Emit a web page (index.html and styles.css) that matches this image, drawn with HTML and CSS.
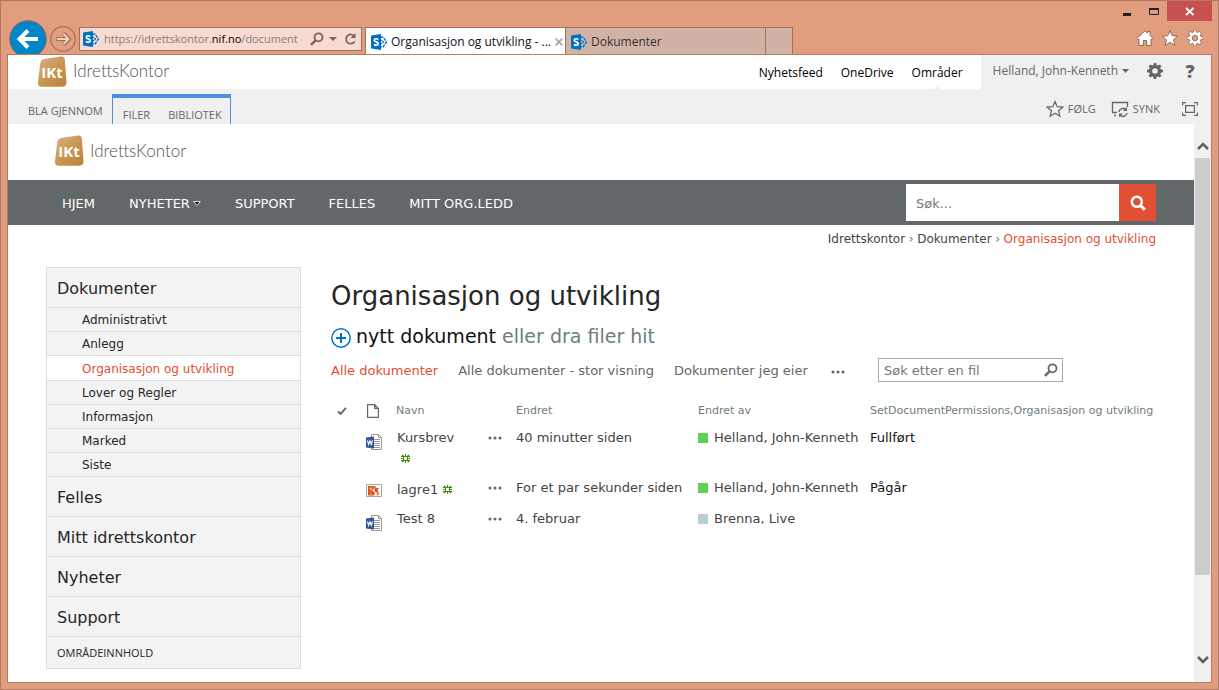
FILE: index.html
```html
<!DOCTYPE html>
<html lang="no">
<head>
<meta charset="utf-8">
<title>Organisasjon og utvikling - Dokumenter</title>
<link rel="stylesheet" href="styles.css">
</head>
<body>
<svg class="defs" aria-hidden="true">
  <defs>
    <linearGradient id="gold" x1="0" y1="0" x2="1" y2="1">
      <stop offset="0" stop-color="#d9b384"/>
      <stop offset="0.55" stop-color="#c79450"/>
      <stop offset="1" stop-color="#bd8237"/>
    </linearGradient>
    <symbol id="sharepoint" viewBox="0 0 16 16">
      <path d="M9.500 3.500 12 3l3.500 5L12 13l-2.500-.5" fill="none" stroke="#0072c6" stroke-width="1.400" stroke-dasharray="3 1"/>
      <path d="M9 5.500 13 8l-4 2.500z" fill="none" stroke="#0072c6"/>
      <path d="M0 1.500 10 0v16L0 14.500z" fill="#0072c6"/>
      <path d="M7.300 5.400C5.500 4.300 3.300 4.600 3.300 6.200c0 2 3.900 1.400 3.900 3.500 0 1.700-2.400 2-4.200.8" fill="none" stroke="#fff" stroke-width="1.700"/>
    </symbol>
    <symbol id="gear" viewBox="0 0 16 16">
      <path fill-rule="evenodd" d="M6.800 0h2.400l.4 2.100 1.200.5L12.600 1.400l1.900 1.900-1.300 1.800.5 1.200 2.300.4v2.500l-2.300.5-.5 1.200 1.300 1.800-1.900 1.900-1.800-1.300-1.200.6L9.200 16H6.800l-.4-2.100-1.200-.6-1.800 1.300-1.900-1.900 1.300-1.800-.5-1.200L0 9.200V6.700l2.300-.4.5-1.200-1.300-1.800 1.900-1.900 1.800 1.200 1.200-.5zM8 5.200a2.800 2.800 0 1 0 0 5.600 2.800 2.800 0 0 0 0-5.600z"/>
    </symbol>
    <symbol id="star" viewBox="0 0 18 18">
      <path d="M9 1.500l2.200 5.200 5.600.4-4.300 3.600 1.400 5.600L9 13.300l-4.900 3 1.400-5.600L1.200 7.100l5.600-.4z"/>
    </symbol>
    <symbol id="lens" viewBox="0 0 14 14">
      <circle cx="8.500" cy="5.300" r="4" fill="none" stroke="currentColor" stroke-width="1.800"/>
      <path d="M5.500 8.300 1 12.800" stroke="currentColor" stroke-width="2.400"/>
    </symbol>
    <symbol id="word" viewBox="0 0 16 16">
      <path d="M5.500.5h7l3 3v12h-10z" fill="#fff" stroke="#9a9a9a"/>
      <path d="M12.500.5v3h3M8 5.500h6M8 7.500h6M8 9.500h6M8 11.500h6M8 13.500h6" fill="none" stroke="#9a9a9a"/>
      <path d="M0 3.500 8 2.500v12l-8-1z" fill="#2b579a"/>
      <path d="M1.500 6.300 2.600 10.500 4 6.800l1.400 3.700 1.100-4.200" fill="none" stroke="#fff" stroke-width="1.100"/>
    </symbol>
    <symbol id="picture" viewBox="0 0 16 13">
      <path d="M.5.5h15v12H.5z" fill="#fff" stroke="#a6a6a6"/>
      <path d="M2 2h7l-1 3-2 2-4 1zM2 8l5-1 2 2-1 2.500H2z" fill="#d9532c"/>
      <circle cx="5" cy="4.800" r="1.500" fill="#f6b73c"/>
      <path d="M9 2l1.500 2L13 4l-1.500 2.500L13 9l-3-.5L8.500 7z" fill="#d9532c"/>
      <path d="M4.500 8.200 6 10l-2 1.500zM10.500 9.500l2-1 1.500 1.500-1.500 1.500h-2z" fill="#f0a030"/>
    </symbol>
    <symbol id="new" viewBox="0 0 9 9">
      <g fill="none" stroke="#3c8a0a"><path d="M4.500 0v2.500M4.500 6.500V9M0 4.500h1.800M7.200 4.500H9"/><path d="M1 1l2 2M8 1 6 3M1 8l2-2M8 8 6 6" stroke-width="1.400"/><path d="M2.500 2.500h4v4h-4z"/><path d="M0 2.500h2.500M6.500 2.500H9M0 6.500h2.500M6.500 6.500H9"/></g>
    </symbol>
    <symbol id="dots" viewBox="0 0 14 4"><path d="M2 2h.01M7 2h.01M12 2h.01" stroke="#666" stroke-width="3" stroke-linecap="round"/></symbol>
    <symbol id="logo" viewBox="0 0 30 31">
      <path d="M4.500 4.500Q5 3.500 7 3L24 .4Q27.500.2 27.800 3.500L29.500 26Q29.500 30.500 25.500 30.700H5Q.7 30.700.9 27L3.300 7Q3.600 5.200 4.500 4.500z" fill="url(#gold)"/>
      <text x="15" y="21.500" class="logo-letters">IKt</text>
    </symbol>
  </defs>
</svg>

<div class="window">
  <header class="chrome">
    <div class="chrome-main">
      <button class="back" aria-label="Tilbake"><svg viewBox="0 0 38 38"><circle cx="19" cy="19" r="18.300" fill="#0086c8" stroke="#8c6455"/><path d="M29 19H11M19 10.500 10.500 19l8.500 8.500" fill="none" stroke="#fff" stroke-width="4"/></svg></button>
      <button class="forward" aria-label="Frem"><svg viewBox="0 0 26 26"><circle cx="13" cy="13" r="12.300" fill="none" stroke="#a56f59" stroke-width="1.200"/><path d="M6 13h12M13.500 7.500 19 13l-5.500 5.500" fill="none" stroke="#a56f59" stroke-width="4"/><path d="M6.800 13h11.500M13.500 8 18.500 13l-5 5" fill="none" stroke="#f3cdbd" stroke-width="2"/></svg></button>
      <div class="address">
        <svg class="i16"><use href="#sharepoint"/></svg>
        <span class="url">https://idrettskontor.<b>nif.no</b>/document</span>
        <svg class="i14"><use href="#lens"/></svg>
        <svg class="drop" viewBox="0 0 8 4"><path d="M0 0h8L4 4z" fill="#85604f"/></svg>
        <svg class="i14" viewBox="0 0 14 14"><path d="M11.500 4.500A4.600 4.600 0 1 0 11.600 9.500" fill="none" stroke="currentColor" stroke-width="1.700"/><path d="M12.500 1v5h-5z" fill="currentColor"/></svg>
      </div>
      <div class="tabs">
        <div class="tab tab-on"><svg class="i16"><use href="#sharepoint"/></svg><span>Organisasjon og utvikling - ...</span>
          <button class="tab-close" aria-label="Lukk fane"><svg viewBox="0 0 8 8"><path d="M.7.7 7.300 7.300M7.300.7.7 7.300" stroke="#aaa" stroke-width="1.900"/></svg></button></div>
        <div class="tab"><svg class="i16"><use href="#sharepoint"/></svg><span>Dokumenter</span></div>
        <button class="tab-new" aria-label="Ny fane"></button>
      </div>
    </div>
    <div class="chrome-side">
      <div class="controls">
        <button aria-label="Minimer"><svg viewBox="0 0 27 20"><path d="M10 12h8v3h-8z" fill="#222"/></svg></button>
        <button aria-label="Maksimer"><svg viewBox="0 0 27 20"><path d="M9.500 7.500h9v6h-9z" fill="none" stroke="#222"/><path d="M9 7h10v2H9z" fill="#222"/></svg></button>
        <button class="close" aria-label="Lukk"><svg viewBox="0 0 45 20"><path d="M19 7l7.500 7M26.500 7 19 14" stroke="#fff" stroke-width="1.800"/></svg></button>
      </div>
      <div class="tools">
        <button aria-label="Hjem"><svg viewBox="0 0 18 18"><path d="M1 9.500 9 1.800l2.500 2.300V2.500h2.600v4L17 9.500l-1.200 1.300-.8-.8v6.500h-4.300v-5H7.300v5H3V10l-.8.800z" fill="#fff" stroke="#85604f" stroke-width=".9"/></svg></button>
        <button aria-label="Favoritter"><svg fill="#fff" stroke="#85604f" stroke-width=".9"><use href="#star"/></svg></button>
        <button aria-label="Verktøy"><svg viewBox="-1 -1 18 18" fill="#fff" stroke="#85604f" stroke-width=".8"><use href="#gear" width="16" height="16"/></svg></button>
      </div>
    </div>
  </header>

  <div class="page">
    <div class="suite">
      <a class="logo" href="#"><svg><use href="#logo"/></svg><span>IdrettsKontor</span></a>
      <nav class="suite-links"><a href="#">Nyhetsfeed</a><a href="#">OneDrive</a><a class="here" href="#">Områder</a></nav>
      <div class="account">
        <button class="user">Helland, John-Kenneth<svg viewBox="0 0 7 4"><path d="M0 0h7L3.500 4z"/></svg></button>
        <button aria-label="Innstillinger"><svg class="i16" fill="#666"><use href="#gear"/></svg></button>
        <button class="help" aria-label="Hjelp">?</button>
      </div>
    </div>

    <div class="ribbon">
      <a class="browse" href="#">BLA GJENNOM</a>
      <div class="ribbon-group"><a href="#">FILER</a><a href="#">BIBLIOTEK</a></div>
      <div class="ribbon-actions">
        <button><svg class="i18" fill="none" stroke="#666" stroke-width="1.200"><use href="#star"/></svg>FØLG</button>
        <button><svg class="i18" viewBox="0 0 18 18" fill="none" stroke="#666" stroke-width="1.300"><path d="M6 12.500H1.500V2.500h15V7M3 15.500h2"/><path d="M8 12a4 4 0 0 1 7-2.200M16 13a4 4 0 0 1-7 2" stroke-width="1.500"/><path d="M16 7v4h-4zM8 17.500v-4h4z" fill="#666" stroke="none"/></svg>SYNK</button>
        <button class="focus" aria-label="Fokus på innhold"><svg viewBox="0 0 16 14" fill="none" stroke="#666" stroke-width="1.200"><path d="M.6 3.500V.6H4M12 .6h3.400v2.900M.6 10.500v2.900H4M12 13.400h3.400v-2.900M3.600 3.600h8.800v6.800H3.600z"/></svg></button>
      </div>
    </div>

    <div class="body">
      <div class="site">
        <div class="brand"><a class="logo" href="#"><svg><use href="#logo"/></svg><span>IdrettsKontor</span></a></div>
        <div class="topnav">
          <nav><a href="#">HJEM</a><a href="#">NYHETER<svg viewBox="0 0 8 5"><path d="M.7.5h6.600L4 4.500z" fill="#111" stroke="#fff" stroke-width=".8"/></svg></a><a href="#">SUPPORT</a><a href="#">FELLES</a><a href="#">MITT ORG.LEDD</a></nav>
          <form class="search">
            <input type="text" placeholder="Søk..." aria-label="Søk">
            <button type="button" aria-label="Søk"><svg viewBox="0 0 16 16" fill="none" stroke="#fff"><circle cx="6.800" cy="6.800" r="5" stroke-width="2.600"/><path d="m10.500 10.500 4.300 4.300" stroke-width="3"/></svg></button>
          </form>
        </div>
        <div class="crumbs"><a href="#">Idrettskontor</a><i>›</i><a href="#">Dokumenter</a><i>›</i><a class="red" href="#">Organisasjon og utvikling</a></div>

        <div class="columns">
          <nav class="side">
            <a class="top" href="#">Dokumenter</a>
            <a class="sub" href="#">Administrativt</a>
            <a class="sub" href="#">Anlegg</a>
            <a class="sub on" href="#">Organisasjon og utvikling</a>
            <a class="sub" href="#">Lover og Regler</a>
            <a class="sub" href="#">Informasjon</a>
            <a class="sub" href="#">Marked</a>
            <a class="sub" href="#">Siste</a>
            <a class="top" href="#">Felles</a>
            <a class="top" href="#">Mitt idrettskontor</a>
            <a class="top" href="#">Nyheter</a>
            <a class="top" href="#">Support</a>
            <a class="all" href="#">OMRÅDEINNHOLD</a>
          </nav>

          <main>
            <h1>Organisasjon og utvikling</h1>
            <div class="newdoc"><svg viewBox="0 0 20 20" fill="none" stroke="#0072c6"><circle cx="10" cy="10" r="9.200" stroke-width="1.500"/><path d="M10 5v10M5 10h10" stroke-width="2"/></svg><p><a href="#">nytt dokument</a> eller dra filer hit</p></div>
            <div class="views">
              <a class="red" href="#">Alle dokumenter</a><a href="#">Alle dokumenter - stor visning</a><a href="#">Dokumenter jeg eier</a>
              <button class="more" aria-label="Flere visninger"><svg class="dots"><use href="#dots"/></svg></button>
              <div class="filter"><input type="text" placeholder="Søk etter en fil" aria-label="Søk etter en fil"><button aria-label="Søk i filer"><svg class="i14"><use href="#lens"/></svg></button></div>
            </div>
            <table>
              <colgroup><col class="c-check"><col class="c-type"><col class="c-name"><col class="c-menu"><col class="c-date"><col class="c-by"><col></colgroup>
              <thead><tr>
                <th class="mark"><svg class="check" viewBox="0 0 10 8"><path d="M1 4.500 3.500 7 9 .8" fill="none" stroke="#666" stroke-width="1.900"/></svg></th>
                <th class="mark"><svg class="sheet" viewBox="0 0 12 14"><path d="M.6.6h7l3.800 3.800v9H.6zM7.600.6v3.800h3.800" fill="none" stroke="#666" stroke-width="1.200"/></svg></th>
                <th>Navn</th><th></th><th>Endret</th><th>Endret av</th><th>SetDocumentPermissions,Organisasjon og utvikling</th>
              </tr></thead>
              <tbody>
                <tr><td></td><td class="type"><svg class="i16"><use href="#word"/></svg></td><td><a href="#">Kursbrev</a><svg class="fresh below"><use href="#new"/></svg></td><td class="menu"><button aria-label="Meny for Kursbrev"><svg class="dots"><use href="#dots"/></svg></button></td><td>40 minutter siden</td><td><span class="who"><i class="free"></i>Helland, John-Kenneth</span></td><td class="dark">Fullført</td></tr>
                <tr><td></td><td class="type"><svg class="pic"><use href="#picture"/></svg></td><td class="badged"><a href="#">lagre1</a><svg class="fresh"><use href="#new"/></svg></td><td class="menu"><button aria-label="Meny for lagre1"><svg class="dots"><use href="#dots"/></svg></button></td><td>For et par sekunder siden</td><td><span class="who"><i class="free"></i>Helland, John-Kenneth</span></td><td class="dark">Pågår</td></tr>
                <tr><td></td><td class="type"><svg class="i16"><use href="#word"/></svg></td><td><a href="#">Test 8</a></td><td class="menu"><button aria-label="Meny for Test 8"><svg class="dots"><use href="#dots"/></svg></button></td><td>4. februar</td><td><span class="who"><i></i>Brenna, Live</span></td><td></td></tr>
              </tbody>
            </table>
          </main>
        </div>
      </div>
      <div class="scrollbar">
        <button aria-label="Rull opp"><svg viewBox="0 0 12 8"><path d="M1 7l5-5 5 5" fill="none" stroke="#606060" stroke-width="2.600"/></svg></button>
        <div class="track"><div class="thumb"></div></div>
        <button class="down" aria-label="Rull ned"><svg viewBox="0 0 12 8"><path d="M1 1l5 5 5-5" fill="none" stroke="#606060" stroke-width="2.600"/></svg></button>
      </div>
    </div>
  </div>
</div>
</body>
</html>
```
FILE: styles.css
```css
* { box-sizing: border-box; }

body {
  margin: 0;
  color: #444;
  font: 13px/20px "DejaVu Sans", Verdana, sans-serif;
  background: #e29d7e;
}

a { color: inherit; text-decoration: none; }
button { display: block; margin: 0; padding: 0; border: 0; background: none; color: inherit; font: inherit; }
input { min-width: 0; border: 0; margin: 0; font: inherit; color: #444; background: #fff; }
input::placeholder { color: #777; opacity: 1; }
svg { display: block; flex: none; }
.defs { position: absolute; width: 0; height: 0; }
.i14 { width: 14px; height: 14px; }
.i16 { width: 16px; height: 16px; }
.i18 { width: 18px; height: 18px; }
.dots { width: 14px; height: 4px; }
.red { color: #e14f34; }

/* Browser window */
.window { min-height: 100vh; display: flex; flex-direction: column; border: 1px solid #b07a63; padding: 0 6px 6px; }
.chrome, .suite, .ribbon { font-family: "Open Sans", "Segoe UI", sans-serif; font-size: 12px; line-height: 16px; }
.chrome { display: flex; justify-content: space-between; height: 53px; overflow: hidden; }
.chrome-main { display: flex; align-items: flex-end; padding-left: 2px; }
.back { width: 38px; height: 38px; margin-bottom: -4px; }
.forward { width: 26px; height: 26px; margin: 0 3px 2px; }
.address { display: flex; align-items: center; width: 283px; height: 24px; margin: 0 3px 3px 0; padding: 0 4px 0 3px; border: 1px solid #a56f59; background: #f5dbd2; color: #85604f; }
.address svg:first-child { margin-right: 5px; }
.url { flex: 1; min-width: 0; white-space: nowrap; font-size: 11px; color: #8a7a74; }
.url b { font-weight: 400; color: #000; }
.drop { width: 8px; height: 4px; margin: 0 6px 0 5px; }
.tabs { display: flex; }
.tab { display: flex; align-items: center; gap: 4px; width: 200px; height: 27px; padding: 2px 5px 0; border: 1px solid #a56f59; border-width: 1px 0 0 1px; background: #d1b3a6; color: #333; white-space: nowrap; }
.tab-on { background: #fff; color: #111; }
.tab-close { width: 8px; height: 8px; margin-left: auto; }
.tab-close svg { width: 8px; height: 8px; }
.tab-new { width: 28px; height: 27px; border: 1px solid #a56f59; border-bottom: 0; background: #d1b3a6; }
.controls { display: flex; justify-content: flex-end; }
.controls svg { height: 20px; }
.close { background: #c75050; }
.tools { display: flex; justify-content: flex-end; gap: 7px; padding: 8px 8px 0 0; }
.tools svg { width: 18px; height: 18px; }

.page { flex: 1; display: flex; flex-direction: column; border: 1px solid #b57f66; background: #fff; }

/* Suite bar */
.suite { display: flex; }
.logo { display: flex; align-items: center; gap: 6px; color: #555; font: 300 17px/30px Lato, sans-serif; }
.logo svg { width: 30px; height: 31px; }
.logo-letters { font: 700 15px "Open Sans", sans-serif; fill: #fff; text-anchor: middle; }
.suite .logo { padding: 0 0 2px 29px; }
.suite-links { display: flex; align-items: center; gap: 18px; margin-left: auto; padding: 1px 18px 0; color: #000; }
.here { position: relative; }
.here::after { content: ""; position: absolute; left: 50%; top: 21px; margin-left: -3px; border: 3px solid transparent; border-top: 0; border-bottom-color: #f0f0f0; }
.account { display: flex; align-items: center; gap: 18px; height: 34px; padding: 0 14px 2px 12px; background: #f0f0f0; color: #666; }
.user { display: flex; align-items: center; gap: 4px; }
.user svg { width: 7px; height: 4px; fill: #666; }
.help { width: 14px; margin-left: 2px; font-size: 18px; font-weight: 800; }

/* Ribbon */
.ribbon { display: flex; height: 35px; padding: 0 13px 0 20px; background: #f0f0f0; color: #666; font-size: 11px; }
.browse { padding-top: 14px; }
.ribbon-group { display: flex; gap: 18px; margin: 5px 0 0 9px; padding: 9px 8px 0 10px; border: 1px solid #4d8fe5; border-width: 4px 1px 0; }
.ribbon-actions { display: flex; align-items: center; gap: 15px; margin-left: auto; padding-top: 4px; }
.ribbon-actions button { display: flex; align-items: center; gap: 4px; }
.focus { margin-left: 7px; }
.focus svg { width: 16px; height: 14px; }

.body { flex: 1; display: flex; }
.site { flex: 1; min-width: 0; }
.brand { padding: 11px 46px 14px; }
.topnav { display: flex; align-items: center; justify-content: space-between; padding: 4px 38px 4px 54px; background: #626769; color: #fff; }
.topnav nav { display: flex; gap: 34px; padding-top: 2px; }
.topnav nav a { display: flex; align-items: center; gap: 3px; }
.topnav nav svg { width: 8px; height: 5px; }
.search { display: flex; width: 250px; height: 37px; }
.search input { flex: 1; padding: 2px 10px 0; }
.search button { display: grid; place-items: center; width: 37px; background: #e14f34; }
.search svg { width: 16px; height: 16px; }
.crumbs { display: flex; justify-content: flex-end; padding: 4px 38px 18px; font-size: 12px; }
.crumbs i { width: 12px; text-align: center; font-style: normal; color: #777; }

.columns { display: flex; align-items: flex-start; gap: 30px; padding: 0 37px 13px 38px; }

/* Left navigation */
.side { width: 255px; flex: none; border: 1px solid #ddd; background: #f3f3f3; color: #262626; }
.side a { display: block; border-bottom: 1px solid #ddd; }
.side .top { padding: 11px 10px 9px; font-size: 16px; line-height: 19px; }
.side .sub { padding: 2px 35px 0; font-size: 12px; line-height: 21px; }
.side .on { background: #fff; color: #e14f34; line-height: 22px; }
.side .all { padding: 0 10px; border: 0; font: 11px/31px "Open Sans", "Segoe UI", sans-serif; }

/* Library */
main { flex: 1; min-width: 0; }
h1 { margin: 12px 0 0; font-size: 26px; line-height: 34px; font-weight: 400; color: #262626; }
.newdoc { display: flex; align-items: center; gap: 5px; padding-top: 8px; font-size: 19px; line-height: 30px; color: #6d7c80; }
.newdoc svg { width: 20px; height: 20px; margin-top: 4px; }
.newdoc p { margin: 0; }
.newdoc a { color: #111; }
.views { display: flex; align-items: center; gap: 20px; padding-top: 7px; color: #666; white-space: nowrap; }
.views a { padding-top: 2px; }
.more { padding: 4px 0 0 3px; }
.filter { display: flex; align-items: center; width: 185px; height: 24px; margin: 0 94px 0 auto; padding-right: 4px; border: 1px solid #ababab; }
.filter input { flex: 1; padding: 1px 5px 0; }
table { width: 100%; margin-top: 14px; border-collapse: collapse; table-layout: fixed; }
.c-check { width: 29px; }
.c-type { width: 36px; }
.c-name { width: 92px; }
.c-menu { width: 28px; }
.c-date { width: 182px; }
.c-by { width: 172px; }
th { padding: 3px 0 1px; text-align: left; font-size: 11px; line-height: 24px; font-weight: 400; color: #6d7c80; white-space: nowrap; }
.mark { padding-left: 6px; }
.mark + .mark { padding-left: 7px; }
.check { width: 10px; height: 8px; }
.sheet { width: 12px; height: 14px; }
td { padding: 4px 0 7px; vertical-align: top; white-space: nowrap; }
td a { padding-left: 1px; }
td .fresh { display: inline-block; width: 9px; height: 9px; margin-left: 5px; }
td .below { display: block; margin: 6px 0 4px 5px; }
.badged { padding: 6px 0 5px; }
.type { padding: 10px 0 0 6px; }
.pic { width: 16px; height: 13px; }
.menu { padding-top: 12px; }
.who { display: flex; align-items: center; gap: 6px; }
.who i { width: 10px; height: 10px; background: #b7cfda; }
.who .free { background: #5fd255; }
.dark { color: #111; }

/* Scrollbar */
.scrollbar { display: flex; flex-direction: column; width: 17px; background: #f0f0f0; }
.scrollbar button { display: grid; place-items: center; height: 34px; padding-top: 10px; }
.scrollbar .down { padding: 0 0 10px; }
.scrollbar svg { width: 12px; height: 8px; }
.track { flex: 1; padding: 0 1px; }
.thumb { height: 85%; background: #cdcdcd; }
```
